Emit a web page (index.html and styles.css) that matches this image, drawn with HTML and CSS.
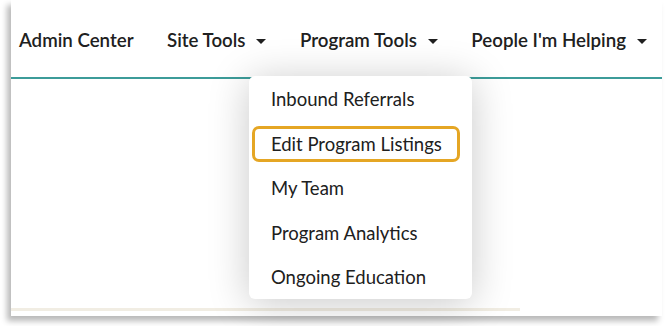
FILE: index.html
```html
<html>
<head>
<title>Program Tools</title>
<link rel="stylesheet" href="styles.css">
</head>
<body>

<div id="pagewrap">
	<div id="card">

		<div id="navbar">
			<div class="navitem"><span class="navlink">Admin Center</span></div>
			<div class="navitem"><span class="navlink">Site Tools</span><span class="caret"></span></div>
			<div class="navitem"><span class="navlink">Program Tools</span><span class="caret"></span>
				<div id="dropmenu">
					<div class="menuitem">Inbound Referrals</div>
					<div class="menuitem focused">Edit Program Listings</div>
					<div class="menuitem">My Team</div>
					<div class="menuitem">Program Analytics</div>
					<div class="menuitem">Ongoing Education</div>
				</div>
			</div>
			<div class="navitem"><span class="navlink">People I'm Helping</span><span class="caret"></span></div>
		</div> <!-- ends div#navbar -->

		<div id="content"></div>
		<div id="footline"></div>

	</div> <!-- ends div#card -->
</div>

</body>
</html>
```

FILE: styles.css
```css
body{
	margin: 0;
	background: white;
	font-family: Lato, "Open Sans", sans-serif;
	color: #202020;
	overflow: hidden;
}

#pagewrap{
	padding-left: 11px;
	height: 326px;
}

#card{
	width: 651px;
	height: 316px;
	background: white;
	box-shadow: -4px 5px 6px rgba(0,0,0,0.28);
	display: flex;
	flex-direction: column;
}

#navbar{
	height: 77px;
	border-bottom: 2px solid #3c9c99;
	display: flex;
	padding-left: 8px;
	gap: 33.5px;
}

.navitem{
	position: relative;
	display: flex;
	align-items: center;
	font-size: 18.7px;
	font-weight: 600;
	padding-top: 3px;
}

.caret{
	width: 0;
	height: 0;
	border-left: 5px solid transparent;
	border-right: 5px solid transparent;
	border-top: 5px solid #202020;
	margin-left: 11px;
	margin-top: 2px;
}

#dropmenu{
	position: absolute;
	left: -51px;
	top: 76px;
	width: 223px;
	height: 223px;
	box-sizing: border-box;
	background: white;
	border-radius: 6px;
	box-shadow: 0 4px 40px rgba(0,0,0,0.22);
	padding: 5px 12px 0 3px;
	font-weight: 400;
	font-size: 18.5px;
	z-index: 2;
}

.menuitem{
	height: 36px;
	margin-bottom: 8.5px;
	box-sizing: border-box;
	padding-left: 16px;
	display: flex;
	align-items: center;
	border: 3px solid transparent;
	border-radius: 7px;
}

.focused{
	border-color: #e5a624;
}

#content{
	flex: 1;
}

#footline{
	width: 509px;
	height: 3px;
	background: #f1ede3;
	margin-bottom: 5px;
}
```
